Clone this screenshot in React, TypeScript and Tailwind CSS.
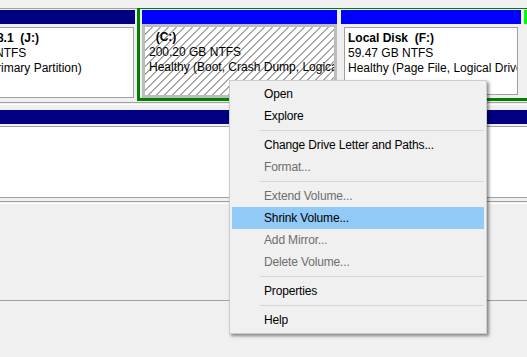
type MenuEntry = { label: string; disabled?: boolean; active?: boolean } | 'sep';

const menu: MenuEntry[] = [
  { label: 'Open' },
  { label: 'Explore' },
  'sep',
  { label: 'Change Drive Letter and Paths...' },
  { label: 'Format...', disabled: true },
  'sep',
  { label: 'Extend Volume...', disabled: true },
  { label: 'Shrink Volume...', active: true },
  { label: 'Add Mirror...', disabled: true },
  { label: 'Delete Volume...', disabled: true },
  'sep',
  { label: 'Properties' },
  'sep',
  { label: 'Help' },
];

function VolumeText({ name, size, status }: { name: string; size: string; status: string }) {
  return (
    <div className="pl-[4px] pt-[3px] leading-[15px] whitespace-pre overflow-hidden">
      <div className="font-bold">{name}</div>
      <div>{size}</div>
      <div>{status}</div>
    </div>
  );
}

function ContextMenu() {
  return (
    <div className="absolute left-[229px] top-[80px] w-[258px] border border-[#cccccc] bg-[#f0f0f0] p-[2px] shadow-[2px_2px_3px_rgba(0,0,0,0.45)]">
      {menu.map((entry, i) =>
        entry === 'sep' ? (
          <div key={i} className="h-[7px] flex items-center pl-[28px]">
            <div className="h-px flex-1 bg-[#d7d7d7]" />
          </div>
        ) : (
          <div
            key={i}
            className={
              'h-[22px] leading-[22px] pl-[32px] tracking-[-0.15px] ' +
              (entry.active ? 'bg-[#91c9f7] ' : '') +
              (entry.disabled ? 'text-[#6d6d6d]' : 'text-black')
            }
          >
            {entry.label}
          </div>
        )
      )}
    </div>
  );
}

export default function App() {
  return (
    <div className="relative w-[527px] h-[357px] overflow-hidden bg-[#f0f0f0] text-[12px] text-black font-['Liberation_Sans',Arial,sans-serif]">
      {/* disk row with the extended partition */}
      <div className="mt-[8px] h-[95px] flex items-start border-b border-[#a0a0a0]">
        {/* J: (cut off on the left) */}
        <div className="-ml-[67px] w-[204px] h-[93px] shrink-0 flex flex-col border-t border-[#a0a0a0] pt-[1px] pr-[2px]">
          <div className="h-[14px] bg-[#000080]" />
          <div className="flex-1 pl-[3px] pr-[1px] py-[3px]">
            <div className="h-full bg-white border border-[#a0a0a0]">
              <VolumeText name="Windows 8.1  (J:)" size="58.59 GB NTFS" status="Healthy (Primary Partition)" />
            </div>
          </div>
        </div>

        {/* extended partition */}
        <div className="h-[93px] flex-1 flex border-t border-l-[3px] border-b-[3px] border-[#008000] min-w-0">
          <div className="w-[199px] shrink-0 flex flex-col pt-[1px] px-[2px]">
            <div className="h-[14px] bg-[#0000ff]" />
            <div className="flex-1 p-[3px] bg-[#bcbcbc]">
              <div className="h-full bg-[repeating-linear-gradient(135deg,#ffffff_0px,#ffffff_4.6px,#a8a8a8_4.6px,#a8a8a8_5.66px)]">
                <VolumeText name="  (C:)" size="200.20 GB NTFS" status="Healthy (Boot, Crash Dump, Logical Drive)" />
              </div>
            </div>
          </div>
          <div className="w-[184px] shrink-0 flex flex-col pt-[1px] px-[2px]">
            <div className="h-[14px] bg-[#0000ff]" />
            <div className="flex-1 p-[3px]">
              <div className="h-full bg-white border border-[#a0a0a0]">
                <div className="-ml-px">
                  <VolumeText name="Local Disk  (F:)" size="59.47 GB NTFS" status="Healthy (Page File, Logical Drive)" />
                </div>
              </div>
            </div>
          </div>
          <div className="w-[40px] shrink-0 flex flex-col pt-[1px] pl-[1px]">
            <div className="h-[14px] bg-[#00ff00]" />
          </div>
        </div>
      </div>

      {/* second disk row */}
      <div className="mt-px border-t border-white pt-[5px]">
        <div className="h-[14px] bg-[#000080]" />
        <div className="pt-[2px] pb-[3px]">
          <div className="h-[72px] bg-white border-y border-[#a0a0a0]" />
        </div>
        <div className="border-t border-[#a0a0a0]" />
        <div className="mt-px border-t border-white" />
      </div>

      {/* empty row */}
      <div className="h-[97px] border-b border-[#a0a0a0]" />

      <ContextMenu />
    </div>
  );
}
